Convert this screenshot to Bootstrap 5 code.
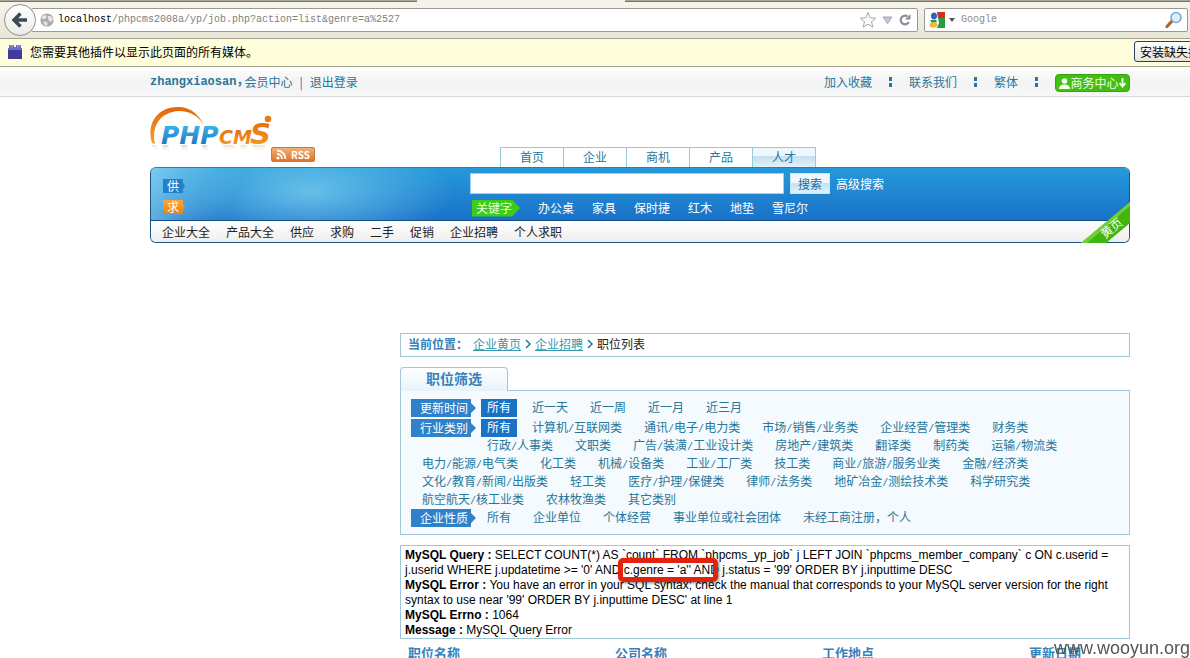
<!DOCTYPE html>
<html lang="zh-CN">
<head>
<meta charset="utf-8">
<meta name="viewport" content="width=device-width, initial-scale=1">
<title>职位列表 - PHPCMS</title>
<link href="https://cdn.jsdelivr.net/npm/bootstrap@5.3.0/dist/css/bootstrap.min.css" rel="stylesheet">
<style>
body{font:12px/18px "Noto Sans CJK SC",sans-serif;color:#222;background:#fff;overflow:hidden}
a{color:#26779b;text-decoration:none}
input,button{font:inherit}
/* browser chrome */
.tabstrip{height:2px;background:#a9a894;border-bottom:1px solid #77756a}
.tabstrip .on{width:208px;margin-left:417px;height:2px;background:#f4f2ea}
.toolbar{height:37px;background:linear-gradient(#f6f4ec,#e8e6d6);border-bottom:1px solid #a2a093;padding:0 2px 0 4px}
.back{width:32px;height:32px;border-radius:50%;border:1px solid #92928a;background:linear-gradient(#fff,#ebebe6);z-index:1}
.box{height:24px;background:#fff;border:1px solid #9a9a94;border-radius:2px;min-width:0}
.url{margin-left:-5px}
.url,.finder input{font-family:"Liberation Mono",monospace;font-size:10px}
.url span{color:#808080}
.url b{font-weight:400;color:#000}
.finder{width:264px;margin-left:6px}
.finder input{border:0;outline:0;min-width:0;background:none;padding:0}
.finder input::placeholder{color:#8f8b80;opacity:1}
.notice{height:28px;background:#fffedb;border-bottom:1px solid #a6a390;color:#000;line-height:16px;padding-bottom:2px}
.install{width:120px;height:21px;margin-right:-64px;border:1px solid #27435a;border-radius:3px;background:linear-gradient(#fff,#e6e4dc);padding:0 5px;line-height:18px;text-align:left;white-space:nowrap}
/* page */
.site{padding-left:150px;padding-right:60px}
.topbar{height:30px;background:linear-gradient(#fefefe,#f3f3f3 50%,#f7f7f7);border-bottom:1px solid #d9d9d9}
.user{font-family:"Liberation Mono","Noto Sans CJK SC",monospace;font-weight:700;margin-right:-4px}
.bar{color:#26779b;margin:0 7px}
.links{gap:17px}
.dots{width:3px;height:10px;background:linear-gradient(#26779b 4px,transparent 4px 6px,#26779b 6px)}
.biz{height:18px;width:75px;border:1px solid #35a80e;border-radius:4px;background:#43bf12;color:#efffe6;padding:0 3px;line-height:16px;margin-top:3px}
.brandbox{width:350px;height:70px}
.rss{width:44px;height:15px;border:1px solid #c77a3e;border-radius:2px;background:linear-gradient(#eeb27a,#dd7426);color:#fff;font-weight:700;font-size:10px;line-height:13px;margin-top:50px}
.chan a{width:63px;height:20px;line-height:18px;text-align:center;border:1px solid #98cbd9;border-width:1px 0 0 1px}
.chan a:last-child{width:64px;border-right-width:1px;background:linear-gradient(#f0f7fc 40%,#c5dff0 45%,#e3f1fa)}
.hero{border:1px solid #1d5580;border-top-color:#2480b8;border-radius:6px;overflow:hidden}
.blue{height:53px;background:linear-gradient(#2699da,#1a71c8);border-bottom:1px solid #124c87}
.shine{width:319px;padding:11px 0 6px;background:radial-gradient(ellipse 45% 110% at 50% 45%,rgba(125,210,240,.75),transparent),linear-gradient(115deg,rgba(150,220,245,.75),transparent 28%)}
.tag{width:22px;height:14px;line-height:13px;padding-right:2px;text-align:center;background:#2180c8;margin-left:12px;clip-path:polygon(0 0,20px 0,20px 4px,22px 7px,20px 10px,20px 100%,0 100%)}
.tag.want{background:linear-gradient(#f6a63a,#ec8206)}
.searcher{padding-top:5px}
.q{height:21px;width:314px;border:1px solid #9bd4ee;border-radius:0;background:#fff;padding:0 4px}
.go{height:21px;width:40px;margin:0 6px;border:1px solid #c9e8f7;background:linear-gradient(#eef8fd 45%,#c3e2f3 50%,#e0f1fa);color:#1d6795;padding:0;line-height:18px}
.blue a{color:#fff}
.kw{width:48px;height:17px;background:#3dcc18;color:#eaffdf;line-height:16px;padding-left:4px;clip-path:polygon(0 0,40px 0,48px 50%,40px 100%,0 100%)}
.keys{gap:18px;margin:5px 0 0 2px}
.sub{height:21px;background:linear-gradient(#fff,#eee);padding-left:11px;gap:16px;line-height:21px}
.sub a{color:#222}
.ribbon{right:0;bottom:0}
.main{margin:90px 0 0 250px}
.crumb{height:24px;border:1px solid #a0c8d8;padding-left:7px;gap:3px;line-height:16px;padding-bottom:2px}
.crumb a{text-decoration:underline;color:#3399b0}
.crumb b{margin-right:2px}
.crumb b,.ftab{color:#3582bc}
.ftab{width:108px;height:24px;margin-top:10px;border:1px solid #a0c8d8;border-bottom:0;border-radius:4px 4px 0 0;background:linear-gradient(#fff,#e6f3fa);font-size:14px;line-height:20px;text-align:center;font-weight:700;position:relative}
.filter{border:1px solid #a0c8d8;background:#f4fafd;padding:8px 10px 7px;margin-top:-1px;white-space:nowrap}
.fr{height:18px;gap:10px}
.fr.first{margin-bottom:2px}
.fr a{padding:0 6px;height:18px;line-height:16px}
.fr a.cur{background:#1a72c4;color:#fff;margin-right:-1px}
.fr i{font:10px/16px "Liberation Mono",monospace}
.fr.in{padding-left:70px}
.fr.out{padding-left:5px}
.lab{width:65px;margin-right:-5px;padding-left:9px;line-height:17px;color:#fff;background:#2f82ca;clip-path:polygon(0 0,60px 0,60px 4px,65px 50%,60px 14px,60px 100%,0 100%)}
.err{border:1px solid #a0c8d8;margin-top:10px;padding:2px 4px 0;line-height:15px;color:#000;white-space:nowrap}
.err,.stamp{font-family:"Liberation Sans",sans-serif}
.ring{position:absolute;inset:-5px -8px -5px -6px;border:5px solid #e3210d;border-radius:5px;box-shadow:1px 1px 3px rgba(0,0,0,.5)}
.jobs{table-layout:fixed;margin-top:4px}
.jobs th{width:207px;padding:0 8px;font-size:13px;line-height:20px;color:#3582bc}
.jobs th:last-child{width:auto}
.stamp{right:0;bottom:0;font-size:18px;line-height:20px;color:#555}
</style>
</head>
<body>
<div class="tabstrip"><div class="on"></div></div>
<div class="toolbar d-flex align-items-center">
  <button class="back p-0 d-flex align-items-center justify-content-center flex-shrink-0" aria-label="后退">
    <svg width="18" height="18" viewBox="0 0 18 18" fill="none" stroke="#3c4a57" stroke-width="3.4"><path d="M16 9H4M9.500 2.500 3 9l6.500 6.500"/></svg>
  </button>
  <div class="box url d-flex align-items-center flex-grow-1 ps-2 pe-1">
    <svg width="14" height="14" viewBox="0 0 14 14" class="me-1 flex-shrink-0"><circle cx="7" cy="7" r="6.600" fill="#aaa"/><path d="M2 3l4-1 1 2-2 2-3 0zM8 3l3 0 2 3-2 3-2-1-1-2zM3 8l4 1 1 2-2 2-2-2z" fill="#e4e4e4"/></svg>
    <b>localhost</b><span>/phpcms2008a/yp/job.php?action=list&amp;genre=a%2527</span>
    <svg class="ms-auto flex-shrink-0" width="54" height="18" viewBox="0 0 54 18"><path d="M9 1.500l2.200 5.200 5.600.4-4.300 3.600 1.400 5.500L9 13.200l-4.900 3 1.400-5.500L1.200 7.100l5.600-.4z" fill="#fafafa" stroke="#a4a8b0"/><path d="M24 6h9l-4.500 6.500z" fill="#c5cbd6" stroke="#9ca4b2"/><path d="M48.500 5.500a4.300 4.300 0 1 0 1.300 5.500" fill="none" stroke="#8b919b" stroke-width="2.300"/><path d="M46 8.500h5.500V3z" fill="#8b919b"/></svg>
  </div>
  <div class="box finder d-flex align-items-center ps-1 pe-1">
    <svg width="16" height="16" viewBox="0 0 16 16" class="flex-shrink-0"><path fill="#fff" d="M0 0h16v16H0z"/><path fill="#d42d22" d="M8 0h8v6H9z"/><path fill="#2c9a43" d="M9 6h7v10H8l2-5z"/><ellipse cx="5" cy="4" rx="3" ry="3.500" fill="#2d62b8"/><path fill="#3b8b55" d="M1 8l6 0 1 2-5 1z"/><ellipse cx="4.500" cy="13" rx="4" ry="2.700" fill="#ecba35"/></svg>
    <svg width="16" height="8" viewBox="0 0 16 8" class="flex-shrink-0"><path d="M4 2h6L7 6z" fill="#555"/></svg>
    <input class="flex-grow-1" type="text" placeholder="Google" aria-label="Google">
    <svg width="18" height="18" viewBox="0 0 18 18" class="flex-shrink-0"><path d="M7 10 2 15.500" stroke="#a9682f" stroke-width="3.200" stroke-linecap="round"/><circle cx="11" cy="6.500" r="5" fill="#d8effc" stroke="#7fa9d2" stroke-width="1.600"/></svg>
  </div>
</div>
<div class="notice d-flex align-items-center ps-2 overflow-hidden">
  <svg width="14" height="16" viewBox="0 0 14 16" class="me-2"><path d="M1 4V1h5v2h2V1h5v3h1v11H0V4z" fill="#6f6cc8"/><path d="M0 6h14v9H0z" fill="#403c9e"/><path d="M2 2h3M9 2h3" stroke="#a5a5ea"/></svg>
  <span>您需要其他插件以显示此页面的所有媒体。</span>
  <button class="install ms-auto flex-shrink-0">安装缺失插件(I)...</button>
</div>
<div class="topbar site d-flex align-items-center">
  <a href="#" class="user">zhangxiaosan，</a><a href="#">会员中心</a><span class="bar">|</span><a href="#">退出登录</a>
  <div class="links ms-auto d-flex align-items-center">
    <a href="#">加入收藏</a><span class="dots"></span><a href="#">联系我们</a><span class="dots"></span><a href="#">繁体</a><span class="dots"></span>
    <button class="biz d-flex align-items-center justify-content-between">
      <svg width="11" height="11" viewBox="0 0 11 11" fill="#f2ffeb"><circle cx="5.500" cy="3" r="2.800"/><path d="M0 11c0-3 2-4 4-4.500h3c2 .5 4 1.500 4 4.500z"/></svg><span>商务中心</span><svg width="7" height="10" viewBox="0 0 7 10"><path d="M3.500 0v8M.5 5l3 3.500 3-3.500" fill="none" stroke="#f2ffeb" stroke-width="1.800"/></svg>
    </button>
  </div>
</div>
<div class="site">
  <header class="d-flex align-items-end">
    <div class="brandbox d-flex">
      <svg width="121" height="62" viewBox="0 0 121 62" role="img" aria-label="PHPCMS" overflow="visible">
        <defs>
          <linearGradient id="b" x1="0" y1="0" x2="0" y2="1"><stop offset="0" stop-color="#42c0f0"/><stop offset="1" stop-color="#1c66bc"/></linearGradient>
          <linearGradient id="o" x1="0" y1="0" x2="0" y2="1"><stop offset="0" stop-color="#e4650a"/><stop offset="1" stop-color="#f3a32c"/></linearGradient>
          <linearGradient id="f" x1="0" y1="0" x2="0" y2="1"><stop offset="0" stop-color="#f6c99a" stop-opacity=".6"/><stop offset="1" stop-color="#fff" stop-opacity="0"/></linearGradient>
          <linearGradient id="g" x1="0" y1="0" x2="0" y2="1"><stop offset="0" stop-color="#a5cdec" stop-opacity=".7"/><stop offset="1" stop-color="#fff" stop-opacity="0"/></linearGradient>
        </defs>
        <path d="M2 46C-4 26 8 10 28 10c13 0 21 8 26 18C48 19 40 14 29 14 11 15 1 28 5 47z" fill="url(#o)"/>
        <path d="M12 48h6l2 8h-7zM31 48h6l2 8h-7zM52 48h5l2 8h-6z" fill="url(#g)"/>
        <path d="M1 48h5l3 7zM72 48h12l2 7H76zM90 48h6l2 7h-6zM102 48h13l-1 7h-8z" fill="url(#f)"/>
        <text x="11" y="47" font-family="DejaVu Sans" font-weight="700" font-style="italic" font-size="25" fill="url(#b)">PHP</text>
        <text x="69" y="47" font-family="DejaVu Sans" font-weight="700" font-style="italic" font-size="19" fill="url(#o)">CM</text>
        <text x="100" y="47" font-family="DejaVu Sans" font-weight="700" font-style="italic" font-size="29" fill="url(#o)">S</text>
        <circle cx="118" cy="22" r="3.300" fill="#e97a1a"/>
      </svg>
      <a href="#" class="rss d-flex align-items-center justify-content-between px-1"><svg width="11" height="11" viewBox="0 0 11 11" fill="none" stroke="#fff" stroke-width="1.800"><circle cx="2" cy="9" r=".7"/><path d="M1 5a5 5 0 0 1 5 5M1 1.500a8.500 8.500 0 0 1 8.500 8.500"/></svg>RSS</a>
    </div>
    <nav class="chan d-flex"><a href="#">首页</a><a href="#">企业</a><a href="#">商机</a><a href="#">产品</a><a href="#">人才</a></nav>
  </header>
  <div class="position-relative">
    <div class="hero">
      <div class="blue d-flex">
        <div class="shine d-flex flex-column justify-content-between flex-shrink-0"><a href="#" class="tag">供</a><a href="#" class="tag want">求</a></div>
        <div class="searcher flex-grow-1">
          <form class="d-flex align-items-center">
            <input class="q" type="text" aria-label="搜索关键字"><button type="button" class="go">搜索</button><a href="#">高级搜索</a>
          </form>
          <div class="keys d-flex align-items-center"><span class="kw">关键字</span><a href="#">办公桌</a><a href="#">家具</a><a href="#">保时捷</a><a href="#">红木</a><a href="#">地垫</a><a href="#">雪尼尔</a></div>
        </div>
      </div>
      <nav class="sub d-flex"><a href="#">企业大全</a><a href="#">产品大全</a><a href="#">供应</a><a href="#">求购</a><a href="#">二手</a><a href="#">促销</a><a href="#">企业招聘</a><a href="#">个人求职</a></nav>
    </div>
    <a href="#" class="ribbon position-absolute d-block"><svg class="d-block" width="49" height="41" viewBox="0 0 49 41"><path d="M0 41 49 0v21L25 41z" fill="#41b610"/><path d="M0 41 49 0v4L6 41z" fill="#6fd035"/><text transform="translate(24 37) rotate(-39)" font-size="12" fill="#fff">黄页</text></svg></a>
  </div>
  <main class="main">
    <nav class="crumb d-flex align-items-center"><b>当前位置：</b><a href="#">企业黄页</a><svg width="8" height="10" viewBox="0 0 8 10"><path d="M2 1l4 4-4 4" fill="none" stroke="#26779b" stroke-width="1.500"/></svg><a href="#">企业招聘</a><svg width="8" height="10" viewBox="0 0 8 10"><path d="M2 1l4 4-4 4" fill="none" stroke="#26779b" stroke-width="1.500"/></svg><span>职位列表</span></nav>
    <div class="ftab">职位筛选</div>
    <section class="filter">
      <div class="fr first d-flex"><span class="lab">更新时间</span><a href="#" class="cur">所有</a><a href="#">近一天</a><a href="#">近一周</a><a href="#">近一月</a><a href="#">近三月</a></div>
      <div class="fr d-flex"><span class="lab">行业类别</span><a href="#" class="cur">所有</a><a href="#">计算机<i>/</i>互联网类</a><a href="#">通讯<i>/</i>电子<i>/</i>电力类</a><a href="#">市场<i>/</i>销售<i>/</i>业务类</a><a href="#">企业经营<i>/</i>管理类</a><a href="#">财务类</a></div>
      <div class="fr in d-flex"><a href="#">行政<i>/</i>人事类</a><a href="#">文职类</a><a href="#">广告<i>/</i>装潢<i>/</i>工业设计类</a><a href="#">房地产<i>/</i>建筑类</a><a href="#">翻译类</a><a href="#">制药类</a><a href="#">运输<i>/</i>物流类</a></div>
      <div class="fr out d-flex"><a href="#">电力<i>/</i>能源<i>/</i>电气类</a><a href="#">化工类</a><a href="#">机械<i>/</i>设备类</a><a href="#">工业<i>/</i>工厂类</a><a href="#">技工类</a><a href="#">商业<i>/</i>旅游<i>/</i>服务业类</a><a href="#">金融<i>/</i>经济类</a></div>
      <div class="fr out d-flex"><a href="#">文化<i>/</i>教育<i>/</i>新闻<i>/</i>出版类</a><a href="#">轻工类</a><a href="#">医疗<i>/</i>护理<i>/</i>保健类</a><a href="#">律师<i>/</i>法务类</a><a href="#">地矿冶金<i>/</i>测绘技术类</a><a href="#">科学研究类</a></div>
      <div class="fr out d-flex"><a href="#">航空航天<i>/</i>核工业类</a><a href="#">农林牧渔类</a><a href="#">其它类别</a></div>
      <div class="fr d-flex"><span class="lab">企业性质</span><a href="#">所有</a><a href="#">企业单位</a><a href="#">个体经营</a><a href="#">事业单位或社会团体</a><a href="#">未经工商注册，个人</a></div>
    </section>
    <section class="err"><b>MySQL Query : </b>SELECT COUNT(*) AS `count` FROM `phpcms_yp_job` j LEFT JOIN `phpcms_member_company` c ON c.userid =<br>j.userid WHERE j.updatetime &gt;= '0' AND <span class="position-relative">c.genre = 'a'' AN<span class="ring"></span></span>D j.status = '99' ORDER BY j.inputtime DESC<br><b>MySQL Error : </b>You have an error in your SQL syntax; check the manual that corresponds to your MySQL server version for the right<br>syntax to use near '99' ORDER BY j.inputtime DESC' at line 1<br><b>MySQL Errno : </b>1064<br><b>Message : </b>MySQL Query Error</section>
    <table class="jobs w-100"><thead><tr><th>职位名称</th><th>公司名称</th><th>工作地点</th><th>更新日期</th></tr></thead></table>
  </main>
</div>
<div class="stamp position-fixed">www.wooyun.org</div>
</body>
</html>
